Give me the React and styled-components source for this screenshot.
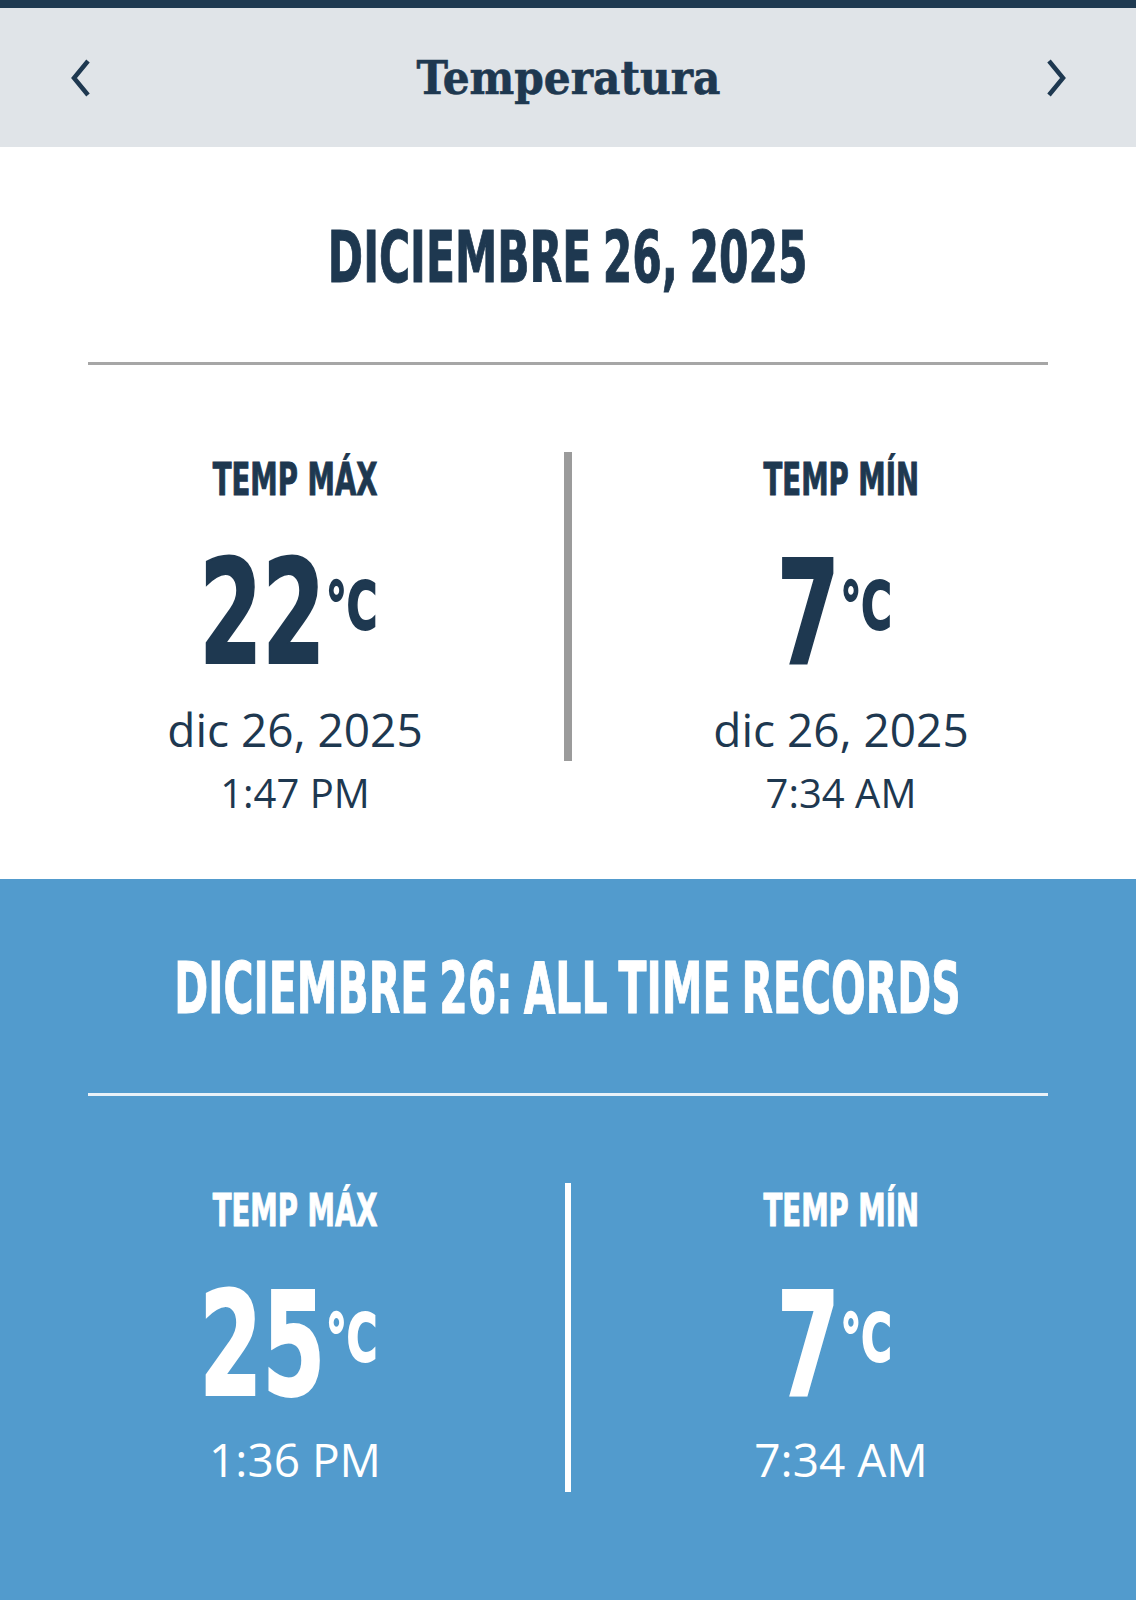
import React from "react";
import styled, { createGlobalStyle } from "styled-components";

const NAVY = "#1e3850";

const GlobalStyle = createGlobalStyle`
  * { box-sizing: border-box; }
  body {
    margin: 0;
    background: #fff;
    font-family: "Open Sans", "Liberation Sans", sans-serif;
  }
`;

const TopStrip = styled.div`
  height: 8px;
  background: #1f3a51;
`;

const NavBar = styled.header`
  height: 139px;
  background: #e0e4e8;
  display: flex;
  align-items: center;
  justify-content: space-between;
  padding: 0 68px 0 69px;
`;

const NavTitle = styled.h1`
  margin: 0;
  font-family: "DejaVu Serif Condensed", "DejaVu Serif", serif;
  font-stretch: condensed;
  font-weight: 700;
  font-size: 47px;
  color: ${NAVY};
  -webkit-text-stroke: 0.6px currentColor;
`;

const NavButton = styled.button`
  border: 0;
  background: none;
  padding: 0;
  display: flex;
  color: ${NAVY};
  cursor: pointer;
`;

const Section = styled.section`
  overflow: hidden;
  background: ${(p) => (p.$tone === "blue" ? "#529bcd" : "#fff")};
  color: ${(p) => (p.$tone === "blue" ? "#fff" : NAVY)};
  padding: ${(p) => (p.$tone === "blue" ? "74px 0 120px" : "75px 0 62px")};
`;

const Condensed = styled.div`
  font-family: "DejaVu Sans Condensed", "DejaVu Sans", sans-serif;
  font-stretch: condensed;
  font-weight: 700;
  line-height: 1;
  white-space: nowrap;
  -webkit-text-stroke: ${(p) => p.$stroke || 1}px currentColor;
`;

const Squeeze = styled.span`
  display: inline-flex;
  align-items: flex-start;
  transform: scaleX(${(p) => p.$x || 0.65});
  transform-origin: center;
`;

const DayTitle = styled(Condensed)`
  display: flex;
  justify-content: center;
  font-size: 71px;
  word-spacing: -5px;
`;

const Rule = styled.hr`
  margin: 69px 88px 0;
  border: 0;
  height: 3px;
  background: ${(p) => (p.$tone === "blue" ? "#e8f1f8" : "#a6a6a6")};
`;

const Stats = styled.div`
  display: grid;
  grid-template-columns: 1fr 8px 1fr;
  column-gap: 12px;
  align-items: start;
  padding: 0 38px;
  margin-top: 87px;
`;

const Divider = styled.div`
  justify-self: center;
  width: ${(p) => p.$width}px;
  height: 309px;
  background: ${(p) => p.$color};
`;

const Stat = styled.div`
  display: flex;
  flex-direction: column;
  align-items: center;
  padding-top: 5px;
`;

const StatLabel = styled(Condensed)`
  display: flex;
  justify-content: center;
  font-size: 45px;
`;

const Reading = styled(Condensed)`
  display: flex;
  justify-content: center;
  margin-top: ${(p) => p.$gap}px;
  margin-right: 14px;
`;

const Value = styled.span`
  font-size: 144px;
`;

const Unit = styled.span`
  font-size: 66px;
  margin: 33px 0 0 1px;
`;

const DateText = styled.div`
  margin-top: 17px;
  font-size: 46px;
  line-height: 1.2;
`;

const TimeText = styled.div`
  margin-top: ${(p) => p.$gap}px;
  font-size: ${(p) => p.$size}px;
  line-height: 1.2;
`;

const Chevron = ({ dir }) => (
  <svg width="22" height="38" viewBox="0 0 22 38" fill="none">
    <polyline
      points={dir === "left" ? "19,2 5,19 19,36" : "3,2 17,19 3,36"}
      stroke="currentColor"
      strokeWidth="4.5"
    />
  </svg>
);

const StatBlock = ({ label, value, date, time, tone }) => (
  <Stat>
    <StatLabel>
      <Squeeze $x={0.68}>{label}</Squeeze>
    </StatLabel>
    <Reading $gap={tone === "blue" ? 40 : 39} $stroke={2}>
      <Squeeze $x={0.7}>
        <Value>{value}</Value>
        <Unit>°C</Unit>
      </Squeeze>
    </Reading>
    {date && <DateText>{date}</DateText>}
    <TimeText $gap={tone === "blue" ? 15 : 12} $size={tone === "blue" ? 46 : 40}>
      {time}
    </TimeText>
  </Stat>
);

const days = [
  {
    tone: "white",
    title: "DICIEMBRE 26, 2025",
    squeeze: 0.665,
    divider: { width: 8, color: "#9b9b9b" },
    max: { value: "22", date: "dic 26, 2025", time: "1:47 PM" },
    min: { value: "7", date: "dic 26, 2025", time: "7:34 AM" },
  },
  {
    tone: "blue",
    title: "DICIEMBRE 26: ALL TIME RECORDS",
    squeeze: 0.641,
    divider: { width: 6, color: "#fff" },
    max: { value: "25", time: "1:36 PM" },
    min: { value: "7", time: "7:34 AM" },
  },
];

const App = () => {
  return (
    <>
      <GlobalStyle />
      <TopStrip />
      <NavBar>
        <NavButton aria-label="anterior">
          <Chevron dir="left" />
        </NavButton>
        <NavTitle>Temperatura</NavTitle>
        <NavButton aria-label="siguiente">
          <Chevron dir="right" />
        </NavButton>
      </NavBar>
      {days.map((day) => (
        <Section key={day.title} $tone={day.tone}>
          <DayTitle>
            <Squeeze $x={day.squeeze}>{day.title}</Squeeze>
          </DayTitle>
          <Rule $tone={day.tone} />
          <Stats>
            <StatBlock label="TEMP MÁX" tone={day.tone} {...day.max} />
            <Divider $width={day.divider.width} $color={day.divider.color} />
            <StatBlock label="TEMP MÍN" tone={day.tone} {...day.min} />
          </Stats>
        </Section>
      ))}
    </>
  );
};

export default App;
